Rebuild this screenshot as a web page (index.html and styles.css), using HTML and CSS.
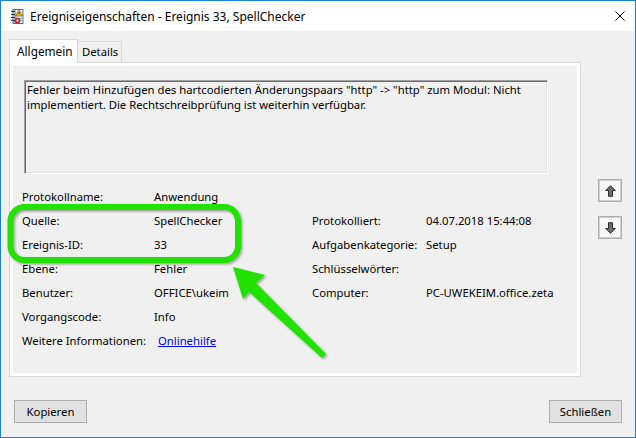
FILE: index.html
```html
<!DOCTYPE html>
<html lang="de">
<head>
<meta charset="utf-8">
<title>Ereigniseigenschaften</title>
<link rel="stylesheet" href="styles.css">
</head>
<body>
<div class="window">
  <div class="titlebar">
    <svg class="appicon" width="14" height="15" viewBox="0 0 14 15">
      <rect x="3" y="0.5" width="10" height="14" fill="#e4ebf3" stroke="#5b6f8c"/>
      <rect x="4" y="1" width="2" height="13" fill="#9fb3cc"/>
      <g stroke="#333" stroke-width="1" fill="none">
        <path d="M1 2.5h4M1 5.5h4M1 8.5h4M1 11.5h4"/>
      </g>
      <path d="M7 9.5h5M7 11.5h5" stroke="#8aa0bd"/>
      <path d="M9 1 L12.5 7 L5.5 7 Z" fill="#f4c300" stroke="#7a5a00" stroke-width="0.7"/>
      <rect x="8.6" y="3" width="0.9" height="2.2" fill="#222"/>
      <circle cx="7.5" cy="11.5" r="2.6" fill="#d8333b" stroke="#8a1016" stroke-width="0.6"/>
      <circle cx="7.5" cy="11.5" r="1" fill="#fff"/>
    </svg>
    <span class="title">Ereigniseigenschaften - Ereignis 33, SpellChecker</span>
    <svg class="close" width="10" height="10" viewBox="0 0 10 10">
      <path d="M0.5 0.5 L9.5 9.5 M9.5 0.5 L0.5 9.5" stroke="#000" stroke-width="1"/>
    </svg>
  </div>
  <div class="client">
    <div class="main">
      <div class="tabarea">
        <div class="tabs">
          <div class="tab active">Allgemein</div>
          <div class="tab">Details</div>
        </div>
        <div class="panel">
          <div class="page">
            <div class="textbox">Fehler beim Hinzufügen des hartcodierten Änderungspaars "http" -&gt; "http" zum Modul: Nicht implementiert. Die Rechtschreibprüfung ist weiterhin verfügbar.</div>
            <div class="props">
              <span class="lbl">Protokollname:</span><span class="val">Anwendung</span><span></span><span></span>
              <span class="lbl">Quelle:</span><span class="val">SpellChecker</span><span class="lbl">Protokolliert:</span><span class="val">04.07.2018 15:44:08</span>
              <span class="lbl">Ereignis-ID:</span><span class="val">33</span><span class="lbl">Aufgabenkategorie:</span><span class="val">Setup</span>
              <span class="lbl">Ebene:</span><span class="val">Fehler</span><span class="lbl">Schlüsselwörter:</span><span class="val"></span>
              <span class="lbl">Benutzer:</span><span class="val">OFFICE\ukeim</span><span class="lbl">Computer:</span><span class="val clip">PC-UWEKEIM.office.zeta</span>
              <span class="lbl">Vorgangscode:</span><span class="val">Info</span><span></span><span></span>
              <span class="lbl">Weitere Informationen:</span><span class="val"><a class="link" href="#">Onlinehilfe</a></span><span></span><span></span>
            </div>
          </div>
        </div>
      </div>
      <div class="side">
        <button class="navbtn" aria-label="Vorheriges">
          <svg width="11" height="12" viewBox="0 0 11 12"><path d="M5.5 0.7 L10.3 5.5 L7.5 5.5 L7.5 11.3 L3.5 11.3 L3.5 5.5 L0.7 5.5 Z" fill="#6e6e6e" stroke="#2b2b2b" stroke-width="1" stroke-linejoin="round"/></svg>
        </button>
        <button class="navbtn" aria-label="Nächstes">
          <svg width="11" height="12" viewBox="0 0 11 12"><path d="M5.5 11.3 L10.3 6.5 L7.5 6.5 L7.5 0.7 L3.5 0.7 L3.5 6.5 L0.7 6.5 Z" fill="#6e6e6e" stroke="#2b2b2b" stroke-width="1" stroke-linejoin="round"/></svg>
        </button>
      </div>
    </div>
    <div class="footer">
      <button class="btn">Kopieren</button>
      <button class="btn">Schließen</button>
    </div>
  </div>
  <svg class="annot" width="636" height="438" viewBox="0 0 636 438">
    <defs>
      <filter id="sh" x="-20%" y="-20%" width="140%" height="140%">
        <feDropShadow dx="1.5" dy="1.5" stdDeviation="1.2" flood-color="#000" flood-opacity="0.35"/>
      </filter>
    </defs>
    <rect x="10.5" y="207" width="227.5" height="53" rx="14" ry="14" fill="none" stroke="#22e000" stroke-width="6" filter="url(#sh)"/>
    <polygon points="233,267 265,275 256,283 326,354 322,358 249,292 243,299" fill="#22e000" filter="url(#sh)"/>
  </svg>
</div>
</body>
</html>
```
FILE: styles.css
```css
* { box-sizing: border-box; }
html, body { margin: 0; padding: 0; background: #f0f0f0; }
body {
  font-family: "Noto Sans", "Open Sans", sans-serif;
  font-size: 11.3px;
  color: #000;
}
.window {
  position: relative;
  width: 636px;
  height: 438px;
  border: 1px solid #1883d7;
  background: #f0f0f0;
  display: flex;
  flex-direction: column;
}
.titlebar {
  height: 30px;
  background: #fff;
  display: flex;
  align-items: center;
  padding-left: 9px;
  flex: none;
}
.appicon { flex: none; }
.title {
  margin-left: 6px;
  font-size: 12px;
  flex: 1;
}
.close { margin-right: 10px; flex: none; }
.client {
  flex: 1;
  background: #f0f0f0;
}
.main {
  display: flex;
  padding: 8px 0 0 8px;
}
.tabarea { width: 572px; flex: none; }
.tabs {
  display: flex;
  align-items: flex-end;
  height: 23px;
  position: relative;
  z-index: 1;
}
.tab {
  border: 1px solid #d9d9d9;
  border-bottom: none;
  border-left: none;
  line-height: 19px;
  height: 21px;
  padding-left: 4px;
  width: 44px;
  background: #f0f0f0;
}
.tab.active {
  border-left: 1px solid #d9d9d9;
  background: #fff;
  width: 69px;
  height: 24px;
  margin-bottom: -1px;
  padding-left: 7px;
  line-height: 22px;
  font-size: 11.8px;
}
.panel {
  border: 1px solid #d9d9d9;
  background: #fff;
  height: 315px;
  padding: 3px;
}
.page {
  background: #f0f0f0;
  height: 100%;
  padding-top: 13px;
  border-top: 1px solid #e8e8e8;
}
.textbox {
  margin-left: 11px;
  width: 524px;
  height: 94px;
  border-top: 1px solid #a0a0a0;
  border-left: 1px solid #a0a0a0;
  border-right: 1px solid #ffffff;
  border-bottom: 1px solid #ffffff;
  box-shadow: inset 1px 1px 0 #696969, inset -1px -1px 0 #e3e3e3;
  padding: 1px 4px 0 2px;
  line-height: 15px;
}
.props {
  margin: 10px 0 0 9px;
  display: grid;
  grid-template-columns: 132px 158px 114px 130px;
  grid-auto-rows: 24px;
  align-items: center;
}
.val.clip { white-space: nowrap; overflow: hidden; }
.link { color: #0000ff; text-decoration: underline; margin-left: 4px; }
.side {
  margin-left: 17px;
  padding-top: 140px;
  display: flex;
  flex-direction: column;
  gap: 14px;
}
.navbtn {
  width: 24px;
  height: 23px;
  padding: 0;
  border: 1px solid #adadad;
  box-shadow: inset 0 0 0 1px #cfcfcf;
  background: #f7f7f7;
  display: flex;
  align-items: center;
  justify-content: center;
}
.footer {
  display: flex;
  justify-content: space-between;
  padding: 0 13px;
  margin-top: 23px;
}
.btn {
  width: 73px;
  height: 23px;
  border: 1px solid #adadad;
  background: #e1e1e1;
  font-family: inherit;
  font-size: 11.3px;
  color: #000;
  padding: 0;
}
.annot {
  position: absolute;
  left: -1px;
  top: -1px;
  pointer-events: none;
}
```
